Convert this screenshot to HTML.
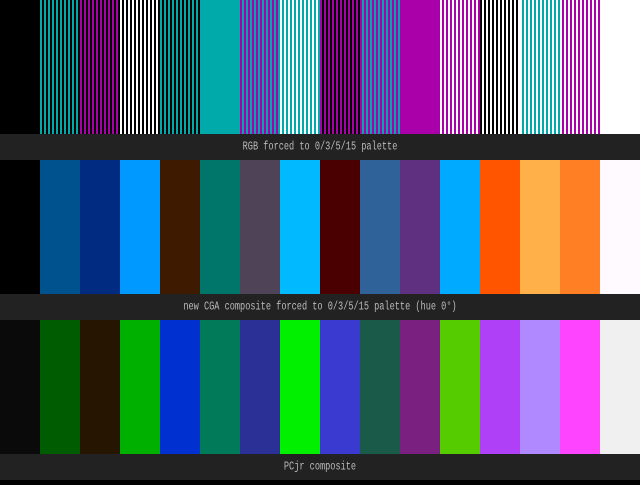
<!DOCTYPE html>
<html><head><meta charset="utf-8"><style>
html,body{margin:0;padding:0;background:#000;width:640px;height:480px;overflow:hidden}
.row{position:absolute;left:0;width:640px;display:flex}
.row div{width:40px;height:100%}
.bar{position:absolute;left:0;width:640px;height:26px;background:#222;color:#bbb;font-family:"Liberation Mono",monospace;font-size:8.6px;text-align:center;line-height:26px}
.bar span{display:inline-block;transform:scaleY(1.35)}
</style></head><body>
<div class="row" style="top:0;height:134px">
<div style="background:#000"></div>
<div style="background:repeating-linear-gradient(90deg,#0aa 0 2px,#000 2px 4px)"></div>
<div style="background:repeating-linear-gradient(90deg,#a0a 0 2px,#000 2px 4px)"></div>
<div style="background:repeating-linear-gradient(90deg,#fff 0 2px,#000 2px 4px)"></div>
<div style="background:repeating-linear-gradient(90deg,#0aa 0 2px,#000 2px 4px)"></div>
<div style="background:#0aa"></div>
<div style="background:repeating-linear-gradient(90deg,#a0a 0 2px,#0aa 2px 4px)"></div>
<div style="background:repeating-linear-gradient(90deg,#fff 0 2px,#0aa 2px 4px)"></div>
<div style="background:repeating-linear-gradient(90deg,#a0a 0 2px,#000 2px 4px)"></div>
<div style="background:repeating-linear-gradient(90deg,#a0a 0 2px,#0aa 2px 4px)"></div>
<div style="background:#a0a"></div>
<div style="background:repeating-linear-gradient(90deg,#fff 0 2px,#a0a 2px 4px)"></div>
<div style="background:repeating-linear-gradient(90deg,#000 0 2px,#fff 2px 4px)"></div>
<div style="background:repeating-linear-gradient(90deg,#fff 0 2px,#0aa 2px 4px)"></div>
<div style="background:repeating-linear-gradient(90deg,#fff 0 2px,#a0a 2px 4px)"></div>
<div style="background:#fff"></div>
</div>
<div class="bar" style="top:134px"><span>RGB forced to 0/3/5/15 palette</span></div>
<div class="row" style="top:160px;height:134px">
<div style="background:#000"></div><div style="background:#00528f"></div><div style="background:#002b80"></div><div style="background:#0099ff"></div>
<div style="background:#3d1a00"></div><div style="background:#00756a"></div><div style="background:#4f4358"></div><div style="background:#00b9ff"></div>
<div style="background:#4a0000"></div><div style="background:#2f6299"></div><div style="background:#603080"></div><div style="background:#00aaff"></div>
<div style="background:#ff5500"></div><div style="background:#ffb048"></div><div style="background:#ff7f25"></div><div style="background:#fffaff"></div>
</div>
<div class="bar" style="top:294px"><span>new CGA composite forced to 0/3/5/15 palette (hue 0°)</span></div>
<div class="row" style="top:320px;height:134px">
<div style="background:#0a0a0a"></div><div style="background:#005c00"></div><div style="background:#261500"></div><div style="background:#00b000"></div>
<div style="background:#0030d0"></div><div style="background:#007a58"></div><div style="background:#2a3095"></div><div style="background:#00f000"></div>
<div style="background:#3a3ad0"></div><div style="background:#1a5a48"></div><div style="background:#7a2080"></div><div style="background:#55cc00"></div>
<div style="background:#b040f8"></div><div style="background:#b088ff"></div><div style="background:#ff44ff"></div><div style="background:#f0f0f0"></div>
</div>
<div class="bar" style="top:454px"><span>PCjr composite</span></div>
</body></html>
